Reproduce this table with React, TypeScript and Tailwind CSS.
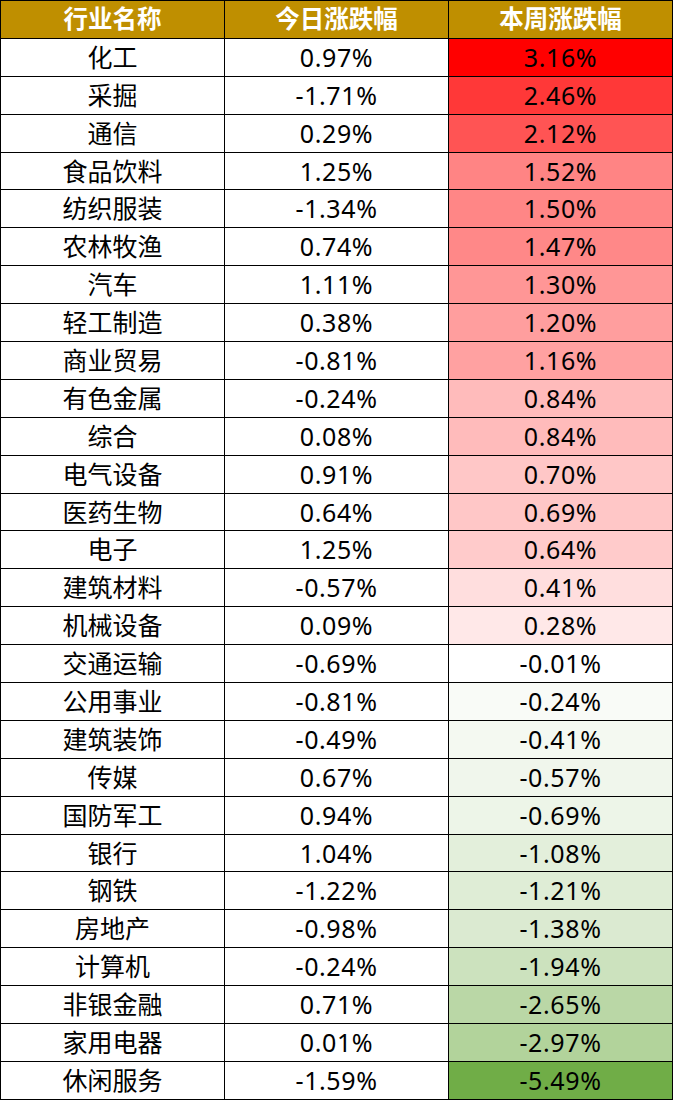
type Row = { name: string; today: string; week: number };

const rows: Row[] = [
  { name: "化工", today: "0.97%", week: 3.16 },
  { name: "采掘", today: "-1.71%", week: 2.46 },
  { name: "通信", today: "0.29%", week: 2.12 },
  { name: "食品饮料", today: "1.25%", week: 1.52 },
  { name: "纺织服装", today: "-1.34%", week: 1.5 },
  { name: "农林牧渔", today: "0.74%", week: 1.47 },
  { name: "汽车", today: "1.11%", week: 1.3 },
  { name: "轻工制造", today: "0.38%", week: 1.2 },
  { name: "商业贸易", today: "-0.81%", week: 1.16 },
  { name: "有色金属", today: "-0.24%", week: 0.84 },
  { name: "综合", today: "0.08%", week: 0.84 },
  { name: "电气设备", today: "0.91%", week: 0.7 },
  { name: "医药生物", today: "0.64%", week: 0.69 },
  { name: "电子", today: "1.25%", week: 0.64 },
  { name: "建筑材料", today: "-0.57%", week: 0.41 },
  { name: "机械设备", today: "0.09%", week: 0.28 },
  { name: "交通运输", today: "-0.69%", week: -0.01 },
  { name: "公用事业", today: "-0.81%", week: -0.24 },
  { name: "建筑装饰", today: "-0.49%", week: -0.41 },
  { name: "传媒", today: "0.67%", week: -0.57 },
  { name: "国防军工", today: "0.94%", week: -0.69 },
  { name: "银行", today: "1.04%", week: -1.08 },
  { name: "钢铁", today: "-1.22%", week: -1.21 },
  { name: "房地产", today: "-0.98%", week: -1.38 },
  { name: "计算机", today: "-0.24%", week: -1.94 },
  { name: "非银金融", today: "0.71%", week: -2.65 },
  { name: "家用电器", today: "0.01%", week: -2.97 },
  { name: "休闲服务", today: "-1.59%", week: -5.49 },
];

const MAX = 3.16;
const MIN = -5.49;

// excel-ish colour scale: white at 0, red at max, green at min
function scaleColor(v: number) {
  if (v >= 0) {
    const t = v / MAX;
    const gb = Math.round(255 * (1 - t));
    return `rgb(255, ${gb}, ${gb})`;
  }
  const t = v / MIN;
  const r = Math.round(255 - (255 - 112) * t);
  const g = Math.round(255 - (255 - 173) * t);
  const b = Math.round(255 - (255 - 71) * t);
  return `rgb(${r}, ${g}, ${b})`;
}

const cell =
  "w-[224px] h-[37.9px] flex items-center justify-center border-r border-b border-black";

export default function App() {
  return (
    <div
      className="bg-white w-[675px] h-[1101px]"
      style={{ fontFamily: '"Noto Sans", "Noto Sans CJK SC", sans-serif' }}
    >
      <div className="w-[673px] border-l border-t border-black text-[25px] text-black leading-none">
        <div className="flex bg-[#bf8f00] text-white font-bold text-[24.5px]">
          <div className={cell}>行业名称</div>
          <div className={cell}>今日涨跌幅</div>
          <div className={cell}>本周涨跌幅</div>
        </div>
        {rows.map((r) => (
          <div key={r.name} className="flex">
            <div className={cell}>{r.name}</div>
            <div className={`${cell} tracking-[0.6px]`}>{r.today}</div>
            <div
              className={`${cell} tracking-[0.6px]`}
              style={{ backgroundColor: scaleColor(r.week) }}
            >
              {r.week.toFixed(2)}%
            </div>
          </div>
        ))}
      </div>
    </div>
  );
}
